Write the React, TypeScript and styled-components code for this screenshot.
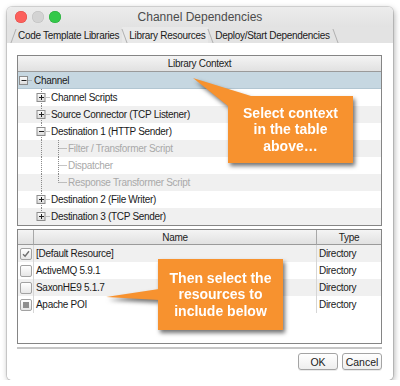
import * as React from 'react';
import styled, { createGlobalStyle } from 'styled-components';

const GlobalStyle = createGlobalStyle`
  html, body {
    margin: 0;
    padding: 0;
    background: #ffffff;
  }
  body {
    font-family: "Liberation Sans", Arial, sans-serif;
    font-size: 10px;
    letter-spacing: -0.3px;
    color: #1a1a1a;
  }
`;

const Window = styled.div`
  position: relative;
  margin: 7px 0 0 7px;
  width: 386px;
  height: 373px;
  background: #ffffff;
  border-radius: 5px;
  box-shadow: 1px 2px 6px rgba(0, 0, 0, 0.35), 0 0 0 1px rgba(0, 0, 0, 0.12);
  display: flex;
  flex-direction: column;
  overflow: hidden;
`;

const TitleBar = styled.div`
  height: 20px;
  display: grid;
  grid-template-columns: 1fr auto 1fr;
  align-items: center;
  background: linear-gradient(#ececec, #e2e2e2);
  padding: 0 8px;
`;

const Lights = styled.div`
  display: flex;
  gap: 5px;
`;

const Light = styled.span<{ $color: string; $ring: string }>`
  width: 12px;
  height: 12px;
  border-radius: 50%;
  background: ${(p) => p.$color};
  box-shadow: inset 0 0 0 0.5px ${(p) => p.$ring};
`;

const Title = styled.div`
  font-size: 12px;
  letter-spacing: 0;
  color: #4b4b4b;
`;

const TabBar = styled.div`
  height: 16px;
  display: flex;
  align-items: stretch;
  background: #e3e3e3;
  padding-left: 4px;
`;

const Tab = styled.div<{ $active?: boolean; $first?: boolean }>`
  position: relative;
  display: flex;
  align-items: center;
  padding: 0 3px 0 7px;
  font-size: 10px;
  color: #1a1a1a;
  background: ${(p) => (p.$active ? '#e9e9e9' : 'transparent')};
  &::before {
    content: '';
    position: absolute;
    left: 2px;
    top: 2px;
    bottom: 0;
    width: 1px;
    background: #b0b0b0;
    transform: skewX(${(p) => (p.$first ? '-20deg' : '20deg')});
  }
`;

const TabEnd = styled.div`
  width: 8px;
  position: relative;
  &::before {
    content: '';
    position: absolute;
    left: 2px;
    top: 2px;
    bottom: 0;
    width: 1px;
    background: #b0b0b0;
    transform: skewX(20deg);
  }
`;

const Content = styled.div`
  flex: 1;
  display: flex;
  flex-direction: column;
  padding: 12px 11px 0 10px;
  background: #ffffff;
`;

const Table = styled.div`
  border: 1px solid #858585;
  display: flex;
  flex-direction: column;
  background: #ffffff;
`;

const HeaderCell = styled.div<{ $divider?: boolean; $tall?: boolean }>`
  height: ${(p) => (p.$tall ? 15 : 14)}px;
  display: flex;
  align-items: center;
  justify-content: center;
  font-size: 10px;
  color: #222;
  background: linear-gradient(#f4f4f4, #e1e1e1);
  border-bottom: 1px solid #9a9a9a;
  border-right: ${(p) => (p.$divider ? '1px solid #a8a8a8' : 'none')};
`;

const TreeRow = styled.div<{ $stripe: boolean; $selected?: boolean }>`
  height: 17px;
  display: flex;
  align-items: center;
  background: ${(p) => (p.$selected ? '#c6d7e1' : p.$stripe ? '#f0f0f0' : '#ffffff')};
  border-bottom: ${(p) => (p.$selected ? '1px solid #b2c6d2' : 'none')};
  box-sizing: border-box;
`;

const Label = styled.span<{ $muted?: boolean }>`
  font-size: 10px;
  color: ${(p) => (p.$muted ? '#a9a9a9' : '#1a1a1a')};
  white-space: nowrap;
`;

const LowerTable = styled(Table)`
  margin-top: 3px;
  height: 115px;
  box-sizing: border-box;
`;

const Grid = styled.div`
  display: grid;
  grid-template-columns: 16px 1fr 64px;
`;

const Cell = styled.div<{ $stripe: boolean; $center?: boolean; $divider?: boolean }>`
  height: 17px;
  display: flex;
  align-items: center;
  justify-content: ${(p) => (p.$center ? 'center' : 'flex-start')};
  padding-left: ${(p) => (p.$center ? '0' : '2px')};
  background: ${(p) => (p.$stripe ? '#f0f0f0' : '#ffffff')};
  border-right: ${(p) => (p.$divider ? '1px solid #d6d6d6' : 'none')};
  font-size: 10px;
  color: #1a1a1a;
`;

const Check = styled.span`
  width: 10px;
  height: 10px;
  border: 1px solid #a2a2a2;
  border-radius: 2px;
  background: linear-gradient(#ffffff, #e6e6e6);
  display: flex;
  align-items: center;
  justify-content: center;
`;

const Partial = styled.span`
  width: 6px;
  height: 6px;
  background: #8e8e8e;
`;

const Separator = styled.div`
  margin-top: 3px;
  height: 2px;
  background: #c6c6c6;
`;

const ButtonRow = styled.div`
  margin-top: 4px;
  display: flex;
  justify-content: flex-end;
  gap: 4px;
`;

const Button = styled.div`
  width: 38px;
  height: 15px;
  border: 1px solid #a4a4a4;
  border-radius: 3px;
  background: linear-gradient(#ffffff, #eeeeee);
  display: flex;
  align-items: center;
  justify-content: center;
  font-size: 10.5px;
  letter-spacing: 0;
  color: #1a1a1a;
  box-shadow: 0 1px 0 rgba(0, 0, 0, 0.08);
`;

const Layer = styled.div`
  position: absolute;
  inset: 0;
  pointer-events: none;
  filter: drop-shadow(2px 3px 2px rgba(0, 0, 0, 0.55));
`;

const Wedge = styled.svg`
  position: absolute;
  left: 0;
  top: 0;
`;

const Note = styled.div<{ $x: number; $y: number; $w: number; $h: number }>`
  position: absolute;
  left: ${(p) => p.$x}px;
  top: ${(p) => p.$y}px;
  width: ${(p) => p.$w}px;
  height: ${(p) => p.$h}px;
  background: #f7922f;
  color: #ffffff;
  font-weight: bold;
  font-size: 14px;
  letter-spacing: 0;
  line-height: 16.5px;
  text-align: center;
  display: flex;
  align-items: center;
  justify-content: center;
`;

const ORANGE = '#f7922f';

type Node = {
  label: string;
  level: 0 | 1 | 2;
  handle?: 'plus' | 'minus';
  last?: boolean;
};

const nodes: Node[] = [
  { label: 'Channel', level: 0, handle: 'minus' },
  { label: 'Channel Scripts', level: 1, handle: 'plus' },
  { label: 'Source Connector (TCP Listener)', level: 1, handle: 'plus' },
  { label: 'Destination 1 (HTTP Sender)', level: 1, handle: 'minus' },
  { label: 'Filter / Transformer Script', level: 2 },
  { label: 'Dispatcher', level: 2 },
  { label: 'Response Transformer Script', level: 2, last: true },
  { label: 'Destination 2 (File Writer)', level: 1, handle: 'plus' },
  { label: 'Destination 3 (TCP Sender)', level: 1, handle: 'plus', last: true },
];

const dot = { stroke: '#8a8a8a', strokeWidth: 1, strokeDasharray: '1 1' };

const Handle = ({ cx, kind }: { cx: number; kind: 'plus' | 'minus' }) => (
  <g>
    <rect x={cx - 4} y={4.5} width={8} height={8} fill="url(#hb)" stroke="#8c8c8c" />
    <line x1={cx - 2} y1={8.5} x2={cx + 3} y2={8.5} stroke="#222" />
    {kind === 'plus' && <line x1={cx + 0.5} y1={6} x2={cx + 0.5} y2={11} stroke="#222" />}
  </g>
);

const Gutter = ({ node }: { node: Node }) => {
  const width = node.level === 0 ? 16 : node.level === 1 ? 33 : 50;
  const a = 23.5;
  const b = 40.5;
  return (
    <svg width={width} height={17} style={{ flex: 'none' }}>
      <defs>
        <linearGradient id="hb" x1="0" y1="0" x2="0" y2="1">
          <stop offset="0" stopColor="#ffffff" />
          <stop offset="1" stopColor="#d9d9d9" />
        </linearGradient>
      </defs>
      {node.level === 0 && (
        <>
          <line x1={9.5} y1={8.5} x2={14} y2={8.5} {...dot} />
          <Handle cx={5.5} kind="minus" />
        </>
      )}
      {node.level === 1 && (
        <>
          <line x1={a} y1={0} x2={a} y2={node.last ? 8.5 : 17} {...dot} />
          <line x1={a + 5} y1={8.5} x2={32} y2={8.5} {...dot} />
          {node.handle === 'minus' && <line x1={b} y1={13} x2={b} y2={17} {...dot} />}
          {node.handle && <Handle cx={a - 0.5} kind={node.handle} />}
        </>
      )}
      {node.level === 2 && (
        <>
          <line x1={a} y1={0} x2={a} y2={17} {...dot} />
          <line x1={b} y1={0} x2={b} y2={node.last ? 8.5 : 17} {...dot} />
          <line x1={b} y1={8.5} x2={49} y2={8.5} {...dot} />
        </>
      )}
    </svg>
  );
};

const CheckMark = () => (
  <svg width="8" height="8" viewBox="0 0 8 8">
    <path d="M1 4.2 L3.1 6.3 L7 1.3" fill="none" stroke="#6f6f6f" strokeWidth="1.4" />
  </svg>
);

type Resource = { name: string; type: string; state: 'on' | 'off' | 'partial' };

const resources: Resource[] = [
  { name: '[Default Resource]', type: 'Directory', state: 'on' },
  { name: 'ActiveMQ 5.9.1', type: 'Directory', state: 'off' },
  { name: 'SaxonHE9 5.1.7', type: 'Directory', state: 'off' },
  { name: 'Apache POI', type: 'Directory', state: 'partial' },
];

const App = () => (
  <>
    <GlobalStyle />
    <Window>
      <TitleBar>
        <Lights>
          <Light $color="#fc605c" $ring="#de4b46" />
          <Light $color="#d3d3d3" $ring="#bdbdbd" />
          <Light $color="#34c84a" $ring="#29a83b" />
        </Lights>
        <Title>Channel Dependencies</Title>
        <span />
      </TitleBar>
      <TabBar>
        <Tab $first>Code Template Libraries</Tab>
        <Tab $active>Library Resources</Tab>
        <Tab>Deploy/Start Dependencies</Tab>
        <TabEnd />
      </TabBar>
      <Content>
        <Table>
          <HeaderCell $tall>Library Context</HeaderCell>
          {nodes.map((n, i) => (
            <TreeRow key={n.label} $stripe={i % 2 === 0} $selected={i === 0}>
              <Gutter node={n} />
              <Label $muted={n.level === 2}>{n.label}</Label>
            </TreeRow>
          ))}
        </Table>
        <LowerTable>
          <Grid>
            <HeaderCell $divider />
            <HeaderCell $divider>Name</HeaderCell>
            <HeaderCell>Type</HeaderCell>
            {resources.map((r, i) => (
              <React.Fragment key={r.name}>
                <Cell $stripe={i % 2 === 0} $center $divider>
                  <Check>
                    {r.state === 'on' && <CheckMark />}
                    {r.state === 'partial' && <Partial />}
                  </Check>
                </Cell>
                <Cell $stripe={i % 2 === 0} $divider>{r.name}</Cell>
                <Cell $stripe={i % 2 === 0}>{r.type}</Cell>
              </React.Fragment>
            ))}
          </Grid>
        </LowerTable>
        <Separator />
        <ButtonRow>
          <Button>OK</Button>
          <Button>Cancel</Button>
        </ButtonRow>
      </Content>
      <Layer>
        <Wedge width="386" height="373">
          <polygon points="186,71 244,89 221,99" fill={ORANGE} />
        </Wedge>
        <Note $x={221} $y={89} $w={125} $h={67}>
          Select context
          <br />
          in the table
          <br />
          above…
        </Note>
      </Layer>
      <Layer>
        <Wedge width="386" height="373">
          <polygon points="99,290 152,282 152,293" fill={ORANGE} />
        </Wedge>
        <Note $x={151} $y={252} $w={125} $h={71}>
          Then select the
          <br />
          resources to
          <br />
          include below
        </Note>
      </Layer>
    </Window>
  </>
);

export default App;
